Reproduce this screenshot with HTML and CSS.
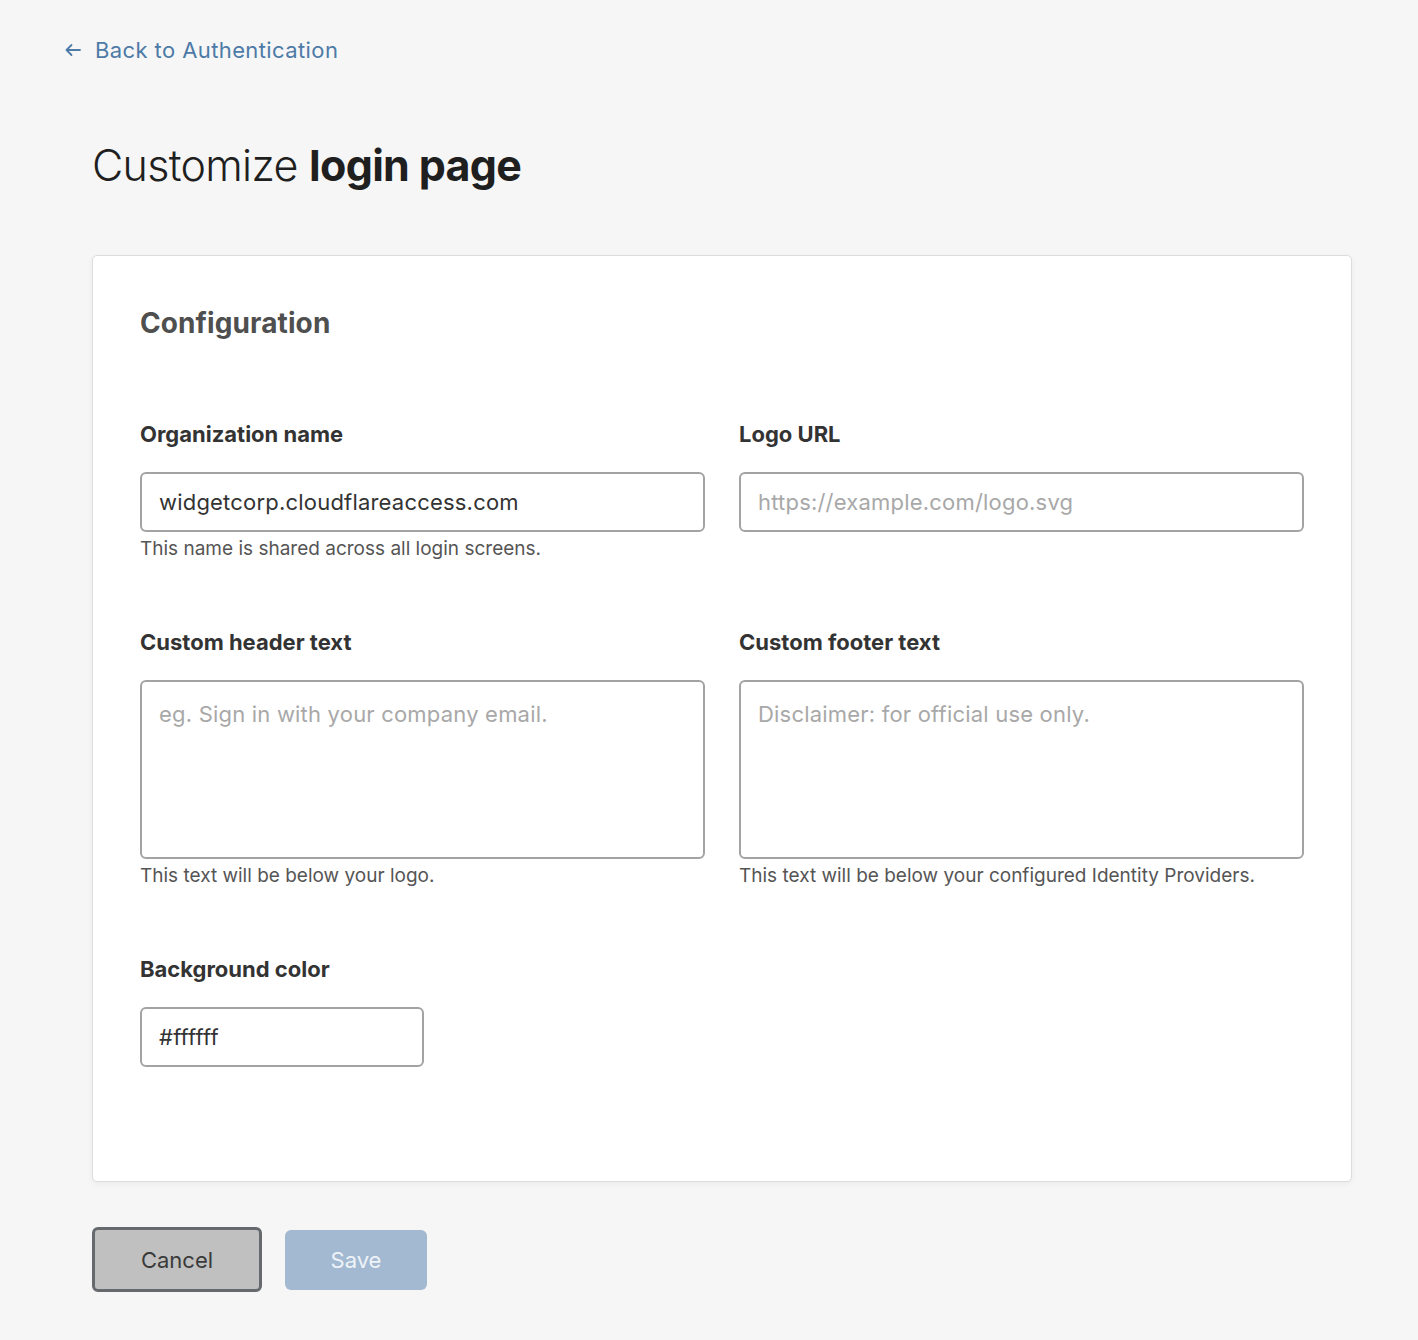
FILE: index.html
```html
<!DOCTYPE html>
<html lang="en">
<head>
<meta charset="utf-8">
<title>Customize login page</title>
<link rel="stylesheet" href="styles.css">
</head>
<body>
<div class="page">
  <a class="back-link" href="#">
    <svg class="back-icon" width="18" height="14" viewBox="0 0 18 14" aria-hidden="true">
      <path d="M16 7H2.5M7.5 2L2.5 7l5 5" fill="none" stroke="currentColor" stroke-width="1.8" stroke-linecap="round" stroke-linejoin="round"/>
    </svg>
    <span>Back to Authentication</span>
  </a>

  <h1 class="title"><span class="light">Customize</span> <strong>login page</strong></h1>

  <section class="card">
    <h2 class="card-title">Configuration</h2>
    <div class="grid">
      <div class="field">
        <label class="label">Organization name</label>
        <input class="input" type="text" value="widgetcorp.cloudflareaccess.com">
        <p class="help">This name is shared across all login screens.</p>
      </div>
      <div class="field">
        <label class="label">Logo URL</label>
        <input class="input" type="text" placeholder="https://example.com/logo.svg">
      </div>
      <div class="field">
        <label class="label">Custom header text</label>
        <textarea class="textarea" placeholder="eg. Sign in with your company email."></textarea>
        <p class="help">This text will be below your logo.</p>
      </div>
      <div class="field">
        <label class="label">Custom footer text</label>
        <textarea class="textarea" placeholder="Disclaimer: for official use only."></textarea>
        <p class="help">This text will be below your configured Identity Providers.</p>
      </div>
      <div class="field">
        <label class="label">Background color</label>
        <input class="input input-short" type="text" value="#ffffff">
      </div>
    </div>
  </section>

  <div class="actions">
    <button class="btn btn-cancel" type="button">Cancel</button>
    <button class="btn btn-save" type="button" disabled>Save</button>
  </div>
</div>
</body>
</html>
```

FILE: styles.css
```css
* { box-sizing: border-box; }
html, body {
  margin: 0;
  padding: 0;
  background: #f6f6f6;
}
body {
  font-family: Inter, "Noto Sans", "Liberation Sans", sans-serif;
  color: #333;
}
.page {
  width: 1418px;
  height: 1340px;
  padding: 36px 66px 0 92px;
}
.back-link {
  display: inline-flex;
  align-items: center;
  gap: 13px;
  margin-left: -28px;
  color: #4d7aa6;
  text-decoration: none;
  font-size: 22px;
  line-height: 28px;
  letter-spacing: 0.4px;
}
.back-icon { display: block; }
.title {
  margin: 75px 0 0 0;
  font-size: 43px;
  line-height: 52px;
  font-weight: 300;
  color: #1f1f1f;
  letter-spacing: -0.7px;
}
.title strong { font-weight: 700; }
.card {
  margin-top: 64px;
  background: #fff;
  border: 1px solid #dcdcdc;
  border-radius: 5px;
  box-shadow: 0 2px 6px rgba(0, 0, 0, 0.05);
  padding: 50px 46px 114px 47px;
}
.card-title {
  margin: 0;
  font-size: 28px;
  line-height: 34px;
  font-weight: 700;
  color: #4f4f4f;
  letter-spacing: 0.1px;
}
.grid {
  margin-top: 81px;
  display: grid;
  grid-template-columns: 565px 565px;
  column-gap: 34px;
  row-gap: 68px;
  align-items: start;
}
.field { display: flex; flex-direction: column; }
.label {
  font-size: 22px;
  line-height: 26px;
  font-weight: 650;
  color: #333;
  letter-spacing: 0;
  margin-bottom: 25px;
}
.input, .textarea {
  font-family: inherit;
  font-size: 22px;
  color: #333;
  background: #fff;
  border: 2px solid #a3a3a3;
  border-radius: 6px;
  outline: none;
  padding: 0 17px;
  letter-spacing: 0.2px;
}
.input {
  height: 60px;
  width: 100%;
}
.input-short { width: 284px; }
.textarea {
  height: 179px;
  width: 100%;
  padding-top: 17px;
  line-height: 30px;
  resize: none;
}
.input::placeholder, .textarea::placeholder { color: #a8a8a8; }
.help {
  margin: 5px 0 0 0;
  font-size: 19px;
  line-height: 24px;
  color: #555;
}
.actions {
  margin-top: 45px;
  display: flex;
  align-items: center;
  gap: 23px;
}
.btn {
  font-family: inherit;
  font-size: 22px;
  border-radius: 6px;
  cursor: pointer;
}
.btn-cancel {
  width: 170px;
  height: 65px;
  background: #c0c0c0;
  border: 3px solid #666a6e;
  color: #3a3a3a;
}
.btn-save {
  width: 142px;
  height: 60px;
  background: #a3b9d1;
  border: none;
  color: #eef3f8;
}
```
